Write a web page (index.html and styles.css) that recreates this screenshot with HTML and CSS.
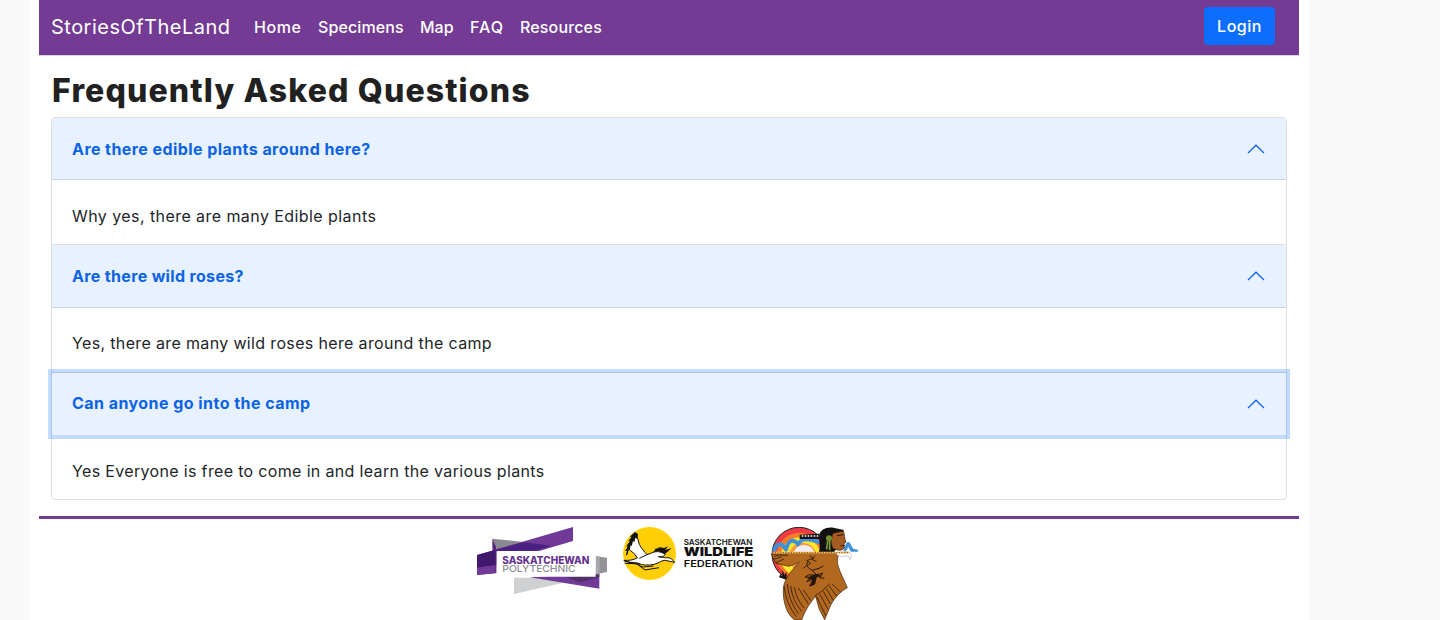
FILE: index.html
```html
<!DOCTYPE html>
<html lang="en">
<head>
<meta charset="utf-8">
<title>Frequently Asked Questions</title>
<link rel="stylesheet" href="styles.css">
</head>
<body>
<div class="page">
  <nav class="navbar">
    <a class="brand">StoriesOfTheLand</a>
    <div class="links"><a class="w-home">Home</a><a class="w-specimens">Specimens</a><a class="w-map">Map</a><a class="w-faq">FAQ</a><a class="w-resources">Resources</a></div>
    <button class="login">Login</button>
  </nav>
  <main class="content">
    <h1>Frequently Asked Questions</h1>
    <div class="accordion">
      <section class="item">
        <button class="question"><span class="q1">Are there edible plants around here?</span><svg class="chevron" viewBox="0 0 20 20"><path d="M2 14 10 6.2 18 14"/></svg></button>
        <div class="answer"><span class="a1">Why yes, there are many Edible plants</span></div>
      </section>
      <section class="item">
        <button class="question"><span class="q2">Are there wild roses?</span><svg class="chevron" viewBox="0 0 20 20"><path d="M2 14 10 6.2 18 14"/></svg></button>
        <div class="answer"><span class="a2">Yes, there are many wild roses here around the camp</span></div>
      </section>
      <section class="item">
        <button class="question focused"><span class="q3">Can anyone go into the camp</span><svg class="chevron" viewBox="0 0 20 20"><path d="M2 14 10 6.2 18 14"/></svg></button>
        <div class="answer"><span class="a3">Yes Everyone is free to come in and learn the various plants</span></div>
      </section>
    </div>
  </main>
  <footer class="footer">
    <svg class="logo-poly" viewBox="21 36 390 201">
      <path fill="#8b8990" d="M67 71 180 83 130 110 76 110Z"/>
      <path fill="#713a98" d="M21 120 309 36V78L200 110H80V174L21 180Z"/>
      <path fill="#4a2080" d="M74 104 160 82 245 92 185 110H80V152H74Z"/>
      <path fill="#56277f" d="M67 71 78 95V174L68 170Z"/>
      <path fill="#421a6c" d="M21 120 76 105V151L21 160Z"/>
      <path fill="#713a98" d="M21 158 76 150V175L21 180Z"/>
      <path fill="#cfd0d2" d="M132 188H290L340 190 132 237Z"/>
      <path fill="#713a98" d="M180 187 388 173V221Z"/>
      <path fill="#513066" d="M290 188 388 173V186L330 202Z"/>
      <path fill="#929397" d="M377 123 411 128V171L377 178Z"/>
      <path fill="#a8a9ad" d="M377 123 389 125V178H377Z"/>
      <path fill="#fff" d="M80 108H377V185H80Z"/>
      <text x="97" y="146" class="poly-name" textLength="261" lengthAdjust="spacingAndGlyphs">SASKATCHEWAN</text>
      <text x="97" y="171" class="poly-sub" textLength="220" lengthAdjust="spacingAndGlyphs">POLYTECHNIC</text>
    </svg>
    <svg class="logo-swf" viewBox="24 36 393 159">
      <circle cx="103.500" cy="115.500" r="79.500" fill="#ffce06"/>
      <path fill="#fff" stroke="#111" stroke-width="3" stroke-linejoin="round" d="M27 136C43 137 54 135 67 129L58 116C48 108 42 104 38 98L47 78 53 62 61 54 68 71 73 88C77 98 89 110 96 119L112 113C124 108 137 109 150 117 151 123 142 126 130 125 143 127 151 129 157 128 166 127 173 134 179 142 167 140 158 137 148 136 136 138 130 145 118 148 98 152 82 151 70 145 56 140 40 145 27 136Z"/>
      <path fill="#111" d="M32 122 36 108 30 108 39 95 34 94 45 78 40 79 50 65 44 65 60 51 69 57 67 72 61 68 58 82 54 78 50 94 47 90 44 106 41 104 38 118ZM114 112 122 102 116 102 135 99 125 95 147 99 160 94 150 105 170 99 158 110 149 118 130 108Z"/>
      <path fill="none" stroke="#111" stroke-width="3" d="M26 137C48 143 58 148 75 147M29 145 63 146 83 156 116 153M65 146 90 165 132 158M73 130 96 119"/>
      <text x="206" y="89" class="swf-small" textLength="206" lengthAdjust="spacingAndGlyphs">SASKATCHEWAN</text>
      <text x="206" y="124" class="swf-big" textLength="209" lengthAdjust="spacingAndGlyphs">WILDLIFE</text>
      <text x="206" y="156" class="swf-mid" textLength="208" lengthAdjust="spacingAndGlyphs">FEDERATION</text>
    </svg>
    <svg class="logo-eagle" viewBox="30 36 273 279">
      <circle cx="117" cy="118" r="81" fill="#ef3b46" stroke="#222" stroke-width="3"/>
      <circle cx="119" cy="122" r="69" fill="#f47d2a"/>
      <circle cx="122" cy="126" r="60" fill="#ffe62b"/>
      <circle cx="128" cy="126" r="42" fill="#f59b45"/>
      <circle cx="132" cy="122" r="32" fill="#f1edf2"/>
      <path fill="none" stroke="#3f91da" stroke-width="12" stroke-linejoin="round" d="M42 109C48 84 64 80 78 104 85 72 102 71 114 88 126 68 143 70 180 82"/>
      <path fill="#3f91da" d="M250 107 259 84Q268 75 275 94L280 101 295 105 293 110 272 110 265 96 258 109Z"/>
      <path fill="#111" d="M119 59 179 56V72H119Z"/>
      <path stroke="#fff" stroke-width="4" stroke-dasharray="5 4" d="M125 63H176"/>
      <path fill="#b2681e" stroke="#36200e" stroke-width="2" stroke-linejoin="round" d="M34 118 110 114 196 114 236 117C228 142 234 150 240 169L262 218C239 230 216 256 207 283L194 314 177 281 167 244C154 260 137 281 125 315H104C82 299 68 266 70 219 75 187 93 170 117 142L87 154 48 145Z"/>
      <path fill="#171310" d="M57 187 61 177 66 184 68 164 73 181 80 170 79 194Z"/>
      <path fill="#fff" stroke="#666" stroke-width="1" d="M230 113 257 109C271 111 277 119 271 133L264 122 245 125 230 120Z"/>
      <path fill="#111" d="M176 112C183 98 176 84 178 61 180 43 202 34 223 39L252 45 239 61 222 80 231 98 222 112Z"/>
      <path fill="#a65b21" stroke="#21140d" stroke-width="2" d="M218 55 250 48C255 60 252 68 258 81L252 86 253 98C248 106 238 107 230 104L218 100 213 82Z"/>
      <path d="M231 62 249 59M242 93 254 91" fill="none" stroke="#26150c" stroke-width="3"/>
      <circle cx="207" cy="70" r="9" fill="#758f2d"/><path d="M203 78 200 103M209 78 209 106" stroke="#819c36" stroke-width="5"/>
      <path fill="none" stroke="#e7c75b" stroke-width="5" d="M37 113H268"/>
      <path fill="none" stroke="#b32928" stroke-width="3" stroke-dasharray="3 5" d="M37 113H268"/>
      <path fill="none" stroke="#321b0c" stroke-width="2.500" d="M43 124 60 120 84 121M40 133 66 125M48 143 72 132M72 212Q77 265 109 305M82 207Q85 256 116 297M92 213Q97 256 125 289M103 216Q109 253 133 280M115 219 145 267M130 225 153 257M164 244Q191 226 209 207M170 245 197 302M180 238 204 283M190 229 211 267M199 221 220 256M208 213 230 244M216 207 242 231M148 123 162 129 140 137 152 145 140 154M166 122 155 133 169 139"/>
      <path fill="none" stroke="#24150c" stroke-width="3" d="M145 139C133 151 147 160 156 166L171 180 188 174 179 188 193 190M167 180 146 180 135 186 154 187 140 200 160 192 149 213 164 207 168 190M157 166 177 160 190 153M137 154 131 160"/>
      <path fill="#24150c" d="M155 182 172 176 184 184 170 187 162 209 152 214 157 194 141 190Z"/>
    </svg>
  </footer>
</div>
</body>
</html>
```
FILE: styles.css
```css
* { box-sizing: border-box; }
body { margin: 0; height: 620px; overflow: hidden; background: #f9f9f9; color: #212529; font-family: Inter, "Noto Sans", sans-serif; font-size: 16px; }
button { font: inherit; border: 0; }
span, a { white-space: nowrap; }
.page { width: 1280px; height: 620px; margin-left: 29px; padding: 0 10px; background: #fff; overflow: hidden; }
.navbar { height: 56px; display: flex; align-items: center; padding: 0 24px 3px 12px; background: #743b94; color: #fff; border-bottom: 1px solid #dcd6e1; }
.brand { width: 203px; font-size: 20px; padding-top: 2px; letter-spacing: .48px; }
.links { display: flex; flex: 1; gap: 16px; padding-top: 2px; font-weight: 500; }
.w-home { width: 48px; letter-spacing: .6px; }
.w-specimens { width: 86px; letter-spacing: .12px; }
.w-map { width: 34px; }
.w-faq { width: 34px; letter-spacing: 1px; }
.w-resources { width: 83px; letter-spacing: .15px; }
.login { width: 71px; height: 38px; padding: 0; border-radius: 4px; background: #0d6efd; color: #fff; font-weight: 500; letter-spacing: .5px; }
.content { padding: 0 12px; }
h1 { margin: 0; height: 61px; padding: 15px 0 0 1px; font-size: 32px; line-height: 40px; font-weight: 800; letter-spacing: 1.15px; color: #212121; white-space: nowrap; }
.accordion { width: 1236px; border: 1px solid #dfdfdf; border-radius: 4px; }
.item + .item { border-top: 1px solid #dfdfdf; }
.question { width: 100%; height: 62px; display: flex; align-items: center; justify-content: space-between; padding: 0 20px; background: #e7f1ff; color: #0c63e4; font-weight: 700; text-align: left; box-shadow: inset 0 -1px #c9d5e4; }
.item:first-child .question { border-radius: 3px 3px 0 0; }
.item:nth-child(2) .question { height: 63px; padding-bottom: 2px; }
.item:nth-child(2) .answer { padding-top: 6px; }
.question.focused { position: relative; box-shadow: 0 0 0 4px rgba(13, 110, 253, .25); }
.focused span { padding-bottom: 2px; }
.q1 { letter-spacing: .43px; }
.q2 { letter-spacing: .34px; }
.q3 { letter-spacing: .45px; }
.a1 { letter-spacing: .43px; }
.a2 { letter-spacing: .35px; }
.a3 { letter-spacing: .34px; }
.chevron { width: 20px; height: 20px; fill: none; stroke: #0c63e4; stroke-width: 1.200; }
.answer { height: 64px; padding: 8px 20px 0; display: flex; align-items: center; }
.footer { margin-top: 16px; padding-top: 8px; border-top: 3px solid #743b94; display: flex; justify-content: center; align-items: flex-start; gap: 16px; }
.logo-poly { width: 130px; height: 67px; }
.logo-swf { width: 131px; height: 53px; }
.logo-eagle { width: 91px; height: 93px; }
.poly-name { font-size: 30px; font-weight: 800; fill: #65318f; }
.poly-sub { font-size: 28px; font-weight: 500; fill: #8c8d91; }
.swf-small { font-size: 23px; font-weight: 600; fill: #111; }
.swf-big { font-size: 37px; font-weight: 900; fill: #111; }
.swf-mid { font-size: 28px; font-weight: 600; fill: #111; }
```
